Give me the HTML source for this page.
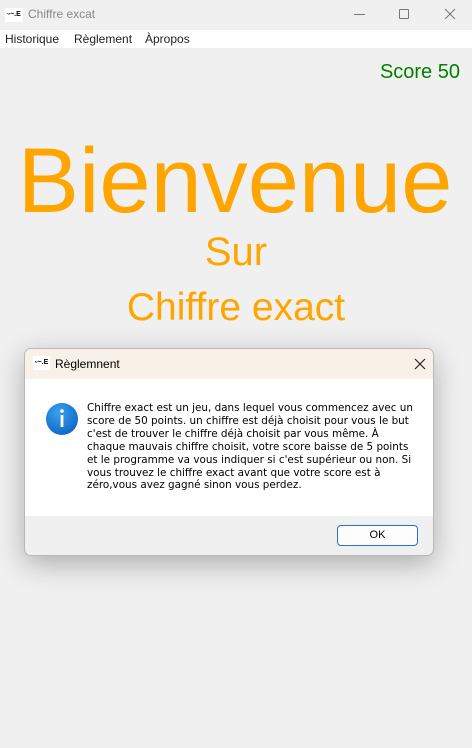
<!DOCTYPE html>
<html><head><meta charset="utf-8"><style>
*{margin:0;padding:0;box-sizing:border-box}
body{width:472px;height:748px;background:#f0f0f0;font-family:"Liberation Sans","DejaVu Sans",sans-serif;position:relative;overflow:hidden}
.tb{position:absolute;left:0;top:0;width:472px;height:30px;background:#f0f0f0}
.menu{position:absolute;left:0;top:30px;width:472px;height:18px;background:#fff;font-size:12px;color:#222}
.menu span{position:absolute;top:2px}
.big{position:absolute;left:0;width:472px;text-align:center;color:#ffa500;white-space:nowrap}
.dlg{position:absolute;left:24px;top:348px;width:410px;height:208px;border:1px solid #b8b8b8;border-radius:7px;overflow:hidden;box-shadow:0 8px 28px rgba(0,0,0,.28);background:#f0f0f0}
.dt{height:30px;background:#f8f1e7;position:relative;font-size:12px}
.db{height:137px;background:#fff;position:relative}
.txt{position:absolute;left:62px;top:53px;font-family:"DejaVu Sans",sans-serif;font-size:10.4px;line-height:12.9px;color:#000;white-space:nowrap}
.ok{position:absolute;left:312px;top:176px;width:81px;height:21px;border:1px solid #2a6fc9;border-radius:4px;background:#fdfdfd;font-size:11px;text-align:center;line-height:19px}
.logo{position:absolute;background:#fff;font-size:7px;font-weight:bold;line-height:14px;text-align:center;color:#000}
</style></head><body>
<div class="tb">
 <div class="logo" style="left:5px;top:8px;width:18px;height:14px">ᵕ~.E</div>
 <span style="position:absolute;left:28px;top:7px;font-size:12px;color:#888">Chiffre excat</span>
 <div style="position:absolute;left:354px;top:14px;width:11px;height:1px;background:#777"></div>
 <div style="position:absolute;left:399px;top:9px;width:10px;height:10px;border:1px solid #777;border-radius:1px"></div>
 <svg style="position:absolute;left:444px;top:8px" width="12" height="12"><path d="M1 1L11 11M11 1L1 11" stroke="#777" stroke-width="1"/></svg>
</div>
<div class="menu"><span style="left:5px">Historique</span><span style="left:74px">Règlement</span><span style="left:145px">Àpropos</span></div>
<div style="position:absolute;right:12px;top:61px;font-size:20px;color:#008000">Score 50</div>
<div class="big" style="top:131px;font-size:92px;line-height:100px;left:-1px">Bienvenue</div>
<div class="big" style="top:229px;font-size:40px;line-height:46px">Sur</div>
<div class="big" style="top:285px;font-size:39px;line-height:46px">Chiffre exact</div>
<div class="dlg">
 <div class="dt"><div class="logo" style="left:8px;top:7px;width:17px;height:14px">ᵕ~.E</div>
  <span style="position:absolute;left:30px;top:8px">Règlemnent</span>
  <svg style="position:absolute;left:389px;top:9px" width="12" height="12"><path d="M1 1L11 11M11 1L1 11" stroke="#222" stroke-width="1.2"/></svg></div>
 <div class="db">
  <svg style="position:absolute;left:20px;top:23px" width="34" height="34"><defs><radialGradient id="g" cx=".4" cy=".3" r=".8"><stop offset="0" stop-color="#3aa0ee"/><stop offset="1" stop-color="#0a62c4"/></radialGradient></defs><circle cx="17" cy="17" r="16" fill="url(#g)"/><rect x="15.6" y="13" width="2.8" height="12" fill="#fff"/><circle cx="17" cy="9" r="1.8" fill="#fff"/></svg>
 </div>
 <div class="txt">Chiffre exact est un jeu, dans lequel vous commencez avec un<br>score de 50 points. un chiffre est déjà choisit pour vous le but<br>c'est de trouver le chiffre déjà choisit par vous même. À<br>chaque mauvais chiffre choisit, votre score baisse de 5 points<br>et le programme va vous indiquer si c'est supérieur ou non. Si<br>vous trouvez le chiffre exact avant que votre score est à<br>zéro,vous avez gagné sinon vous perdez.</div>
 <div class="ok">OK</div>
</div>
</body></html>
